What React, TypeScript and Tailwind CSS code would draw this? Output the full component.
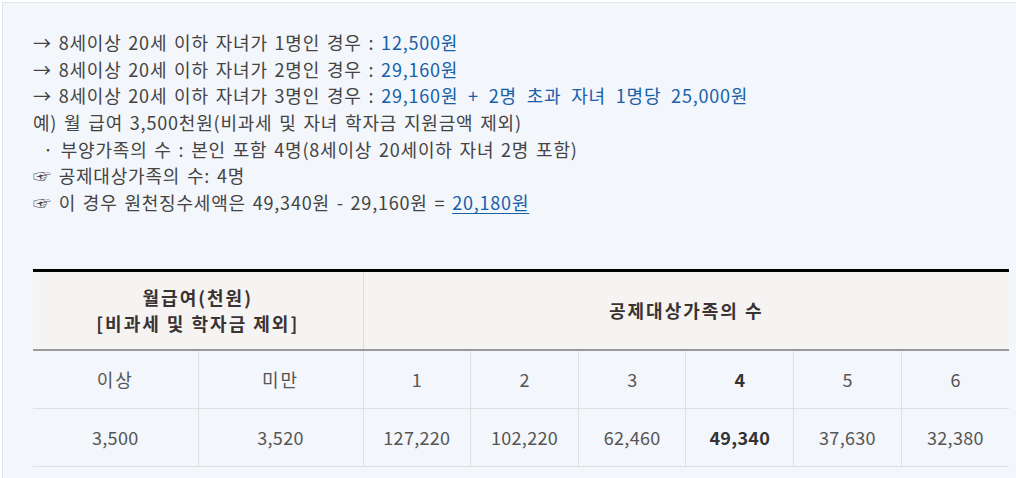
import React from "react";

const font = { fontFamily: '"Noto Sans CJK KR", "Noto Sans", sans-serif' };

export default function App() {
  const counts = ["1", "2", "3", "4", "5", "6"];
  const values = ["127,220", "102,220", "62,460", "49,340", "37,630", "32,380"];
  return (
    <div className="w-[1016px] h-[478px] bg-white overflow-hidden" style={font}>
      <div className="ml-[2px] mt-[2px] h-[500px] w-[1100px] border-t border-l border-[#dfe4eb] bg-[#f3f6fb] pl-[30px] pt-[26px]">
        <div className="text-[18px] leading-[26.67px] text-[#444] tracking-[0.8px] [word-spacing:2px]">
          <p>
            → 8세이상 20세 이하 자녀가 1명인 경우 : <span className="text-[#1760aa]">12,500원</span>
          </p>
          <p>
            → 8세이상 20세 이하 자녀가 2명인 경우 : <span className="text-[#1760aa]">29,160원</span>
          </p>
          <p>
            → 8세이상 20세 이하 자녀가 3명인 경우 :{" "}
            <span className="text-[#1760aa] [word-spacing:5px]">29,160원 + 2명 초과 자녀 1명당 25,000원</span>
          </p>
          <p>예) 월 급여 3,500천원(비과세 및 자녀 학자금 지원금액 제외)</p>
          <p className="pl-[10px]">· 부양가족의 수 : 본인 포함 4명(8세이상 20세이하 자녀 2명 포함)</p>
          <p>☞ 공제대상가족의 수: 4명</p>
          <p>
            ☞ 이 경우 원천징수세액은 49,340원 - 29,160원 ={" "}
            <span className="text-[#1760aa] underline underline-offset-[3px]">20,180원</span>
          </p>
        </div>

        <table className="mt-[53px] w-[976px] table-fixed border-collapse text-[18px] text-[#555]">
          <colgroup>
            <col className="w-[165px]" />
            <col className="w-[165px]" />
            <col />
            <col />
            <col />
            <col />
            <col />
            <col />
          </colgroup>
          <thead>
            <tr className="border-t-[3px] border-t-black border-b-2 border-b-[#9a9a9a] bg-[#f5f4f2]">
              <th
                colSpan={2}
                className="h-[80px] border-r border-[#dedede] font-bold leading-[26px] tracking-[2px] text-[#3a3333]"
              >
                월급여(천원)
                <br />
                [비과세 및 학자금 제외]
              </th>
              <th colSpan={6} className="h-[80px] font-bold tracking-[2px] text-[#3a3333]">
                공제대상가족의 수
              </th>
            </tr>
          </thead>
          <tbody>
            <tr className="border-b border-[#e0e0e0]">
              <td className="h-[58px] border-r border-[#e0e0e0] text-center tracking-[2px]">이상</td>
              <td className="h-[58px] border-r border-[#e0e0e0] text-center tracking-[2px]">미만</td>
              {counts.map((c, i) => (
                <td
                  key={c}
                  className={
                    i === 3
                      ? "h-[58px] border-r border-[#e0e0e0] text-center font-bold text-[#333]"
                      : i === 5
                      ? "h-[58px] text-center"
                      : "h-[58px] border-r border-[#e0e0e0] text-center"
                  }
                >
                  {c}
                </td>
              ))}
            </tr>
            <tr className="border-b border-[#e0e0e0]">
              <td className="h-[58px] border-r border-[#e0e0e0] text-center tracking-[0.3px]">3,500</td>
              <td className="h-[58px] border-r border-[#e0e0e0] text-center tracking-[0.3px]">3,520</td>
              {values.map((v, i) => (
                <td
                  key={v}
                  className={
                    i === 3
                      ? "h-[58px] border-r border-[#e0e0e0] text-center font-bold tracking-[0.3px] text-[#333]"
                      : i === 5
                      ? "h-[58px] text-center tracking-[0.3px]"
                      : "h-[58px] border-r border-[#e0e0e0] text-center tracking-[0.3px]"
                  }
                >
                  {v}
                </td>
              ))}
            </tr>
          </tbody>
        </table>
      </div>
    </div>
  );
}
